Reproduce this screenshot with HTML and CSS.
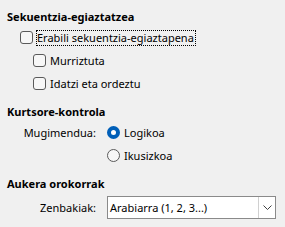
FILE: index.html
```html
<!DOCTYPE html>
<html>
<head>
<meta charset="utf-8">
<link rel="stylesheet" href="styles.css">
</head>
<body>
<div class="panel">
  <div class="heading">Sekuentzia-egiaztatzea</div>
  <div class="row level1">
    <span class="check"></span>
    <span class="label focused">Erabili sekuentzia-egiaztapena</span>
  </div>
  <div class="row level2">
    <span class="check"></span>
    <span class="label">Murriztuta</span>
  </div>
  <div class="row level2">
    <span class="check"></span>
    <span class="label">Idatzi eta ordeztu</span>
  </div>

  <div class="heading gap">Kurtsore-kontrola</div>
  <div class="grid">
    <div class="field-label">Mugimendua:</div>
    <div class="row"><span class="radio checked"></span><span class="label rlabel">Logikoa</span></div>
    <div></div>
    <div class="row"><span class="radio"></span><span class="label rlabel">Ikusizkoa</span></div>
  </div>

  <div class="heading gap">Aukera orokorrak</div>
  <div class="grid select-row">
    <div class="field-label">Zenbakiak:</div>
    <div class="select">
      <span class="value">Arabiarra (1, 2, 3...)</span>
      <span class="btn">
        <svg width="9" height="5" viewBox="0 0 9 5"><path d="M0.5 0.5 L4.5 4.5 L8.5 0.5" fill="none" stroke="#404040" stroke-width="1"/></svg>
      </span>
    </div>
  </div>
</div>
</body>
</html>
```
FILE: styles.css
```css
html, body {
  margin: 0;
  background: #f0f0f0;
}
body {
  font-family: "Noto Sans", "Open Sans", sans-serif;
  font-size: 11px;
  color: #000;
}
.panel {
  padding: 9px 0 0 7px;
}
.heading {
  font-weight: bold;
  line-height: 16px;
  height: 16px;
  margin-bottom: 1px;
}
.heading.gap {
  margin-top: 9px;
  margin-bottom: 1px;
}
.row {
  display: flex;
  align-items: center;
  height: 23px;
}
.level1 { padding-left: 13px; }
.level2 { padding-left: 26px; }
.check {
  box-sizing: border-box;
  width: 13px;
  height: 13px;
  border: 1px solid #5a5a5a;
  border-radius: 3px;
  background: #f7f7f7;
  flex: none;
}
.label {
  line-height: 16px;
  margin-left: 4px;
  white-space: nowrap;
}
.focused {
  margin-left: 3px;
  border: 1px dotted #000;
  padding: 0 1px 0 0;
  line-height: 14px;
}
.grid {
  display: grid;
  grid-template-columns: 74px auto;
  column-gap: 11px;
  margin-left: 15px;
  align-items: center;
}
.field-label {
  text-align: right;
  white-space: nowrap;
}
.radio {
  box-sizing: border-box;
  width: 13px;
  height: 13px;
  border: 1px solid #5a5a5a;
  border-radius: 50%;
  background: #f7f7f7;
  flex: none;
}
.radio.checked {
  border: 4px solid #005fb8;
  background: #fff;
}
.rlabel { margin-left: 4px; }
.select-row {
  margin-top: 4px;
}
.select {
  box-sizing: border-box;
  width: 169px;
  height: 23px;
  border: 1px solid #8a8a8a;
  background: #fff;
  display: flex;
  align-items: stretch;
}
.value {
  flex: 1;
  padding-left: 2px;
  line-height: 21px;
  white-space: nowrap;
}
.btn {
  width: 16px;
  border-left: 1px solid #d0d0d0;
  display: flex;
  align-items: center;
  justify-content: center;
}
```
